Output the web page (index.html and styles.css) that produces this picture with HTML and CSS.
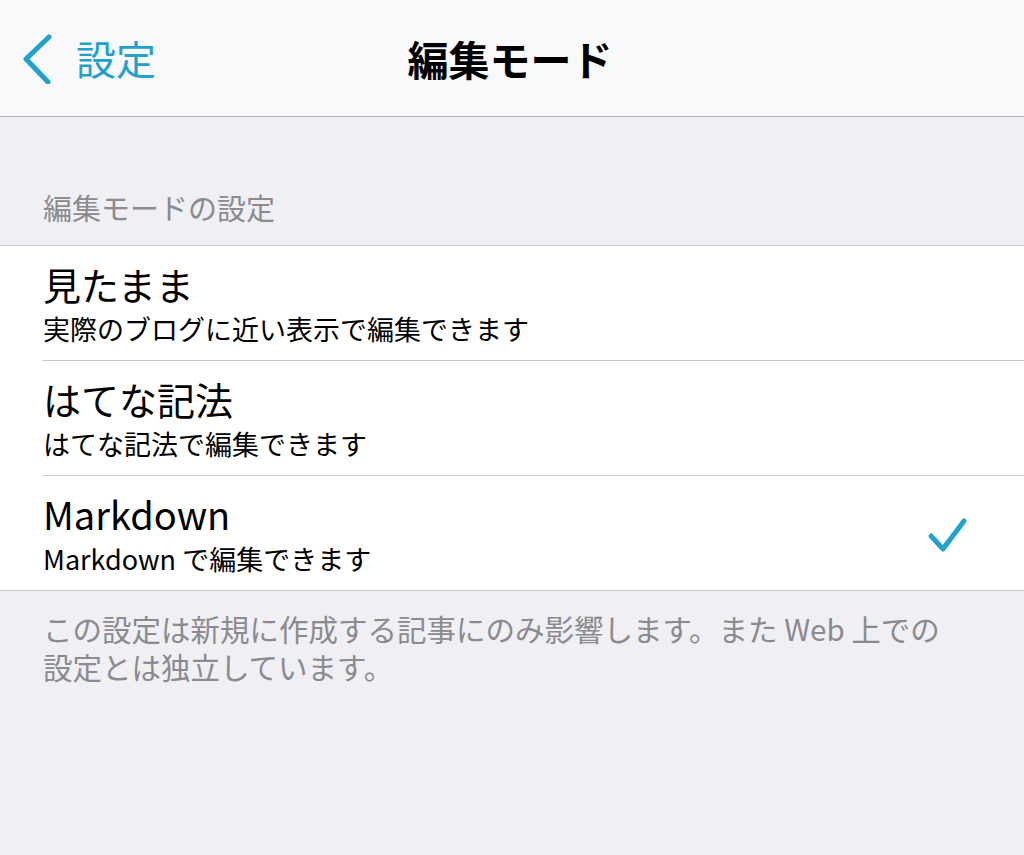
FILE: index.html
```html
<!DOCTYPE html>
<html lang="ja">
<head>
 <meta charset="UTF-8">
 <title>編集モード</title>
 <link rel="stylesheet" href="styles.css">
</head>
<body>
<div class="nav">
  <a class="back" href="#">
    <svg class="chev" width="34" height="52" viewBox="0 0 34 52"><path d="M27 5 L4 27 L26 50" fill="none" stroke="#1fa2cb" stroke-width="5" stroke-linecap="round" stroke-linejoin="round"/></svg>
    <span>設定</span>
  </a>
  <div class="ttl">編集モード</div>
</div>
<div class="sec">編集モードの設定</div>
<ul class="list">
  <li><div class="txt"><div class="n">見たまま</div><div class="d">実際のブログに近い表示で編集できます</div></div></li>
  <li><div class="txt"><div class="n">はてな記法</div><div class="d">はてな記法で編集できます</div></div></li>
  <li><div class="txt"><div class="n">Markdown</div><div class="d">Markdown で編集できます</div></div>
    <svg class="chk" width="44" height="40" viewBox="0 0 44 40"><path d="M5 20 L17 33 L38 5" fill="none" stroke="#1fa2cb" stroke-width="5" stroke-linecap="round" stroke-linejoin="round"/></svg>
  </li>
</ul>
<div class="foot">この設定は新規に作成する記事にのみ影響します。また Web 上での<br>設定とは独立しています。</div>
</body>
</html>
```

FILE: styles.css
```css
body { margin: 0; background: #efeff4; height: 855px; overflow: hidden;
  font-family: "Noto Sans CJK JP", "Noto Sans", sans-serif; color: #000; }
.nav { height: 116px; background: #f9f9fb; border-bottom: 1px solid #b2b2b6;
  display: flex; align-items: center; position: relative; }
.back { display: flex; align-items: center; text-decoration: none; color: #1fa2cb;
  font-size: 40px; padding-left: 22px; gap: 20px; }
.back span { line-height: 1; }
.ttl { position: absolute; left: 0; right: 0; text-align: center; font-size: 41px;
  font-weight: bold; line-height: 116px; top: 0; pointer-events: none; padding-right: 4px; }
.sec { padding: 76px 0 0 43px; height: 52px; font-size: 29px; color: #8a8a8f; line-height: 1; }
.list { list-style: none; margin: 0; padding: 0 0 0 43px; background: #fff;
  border-top: 1px solid #c8c7cc; border-bottom: 1px solid #c8c7cc; }
.list li { height: 114px; display: flex; align-items: center; border-bottom: 1px solid #c8c7cc;
  padding-right: 54px; }
.list li:last-child { border-bottom: 0; }
.txt { flex: 1; padding-top: 0; }
.n { font-size: 38px; line-height: 52px; }
.d { font-size: 27px; line-height: 38px; }
.chk { margin-top: 6px; }
.foot { padding: 18px 43px 0; font-size: 29.5px; line-height: 38px; color: #8a8a8f; }
```
